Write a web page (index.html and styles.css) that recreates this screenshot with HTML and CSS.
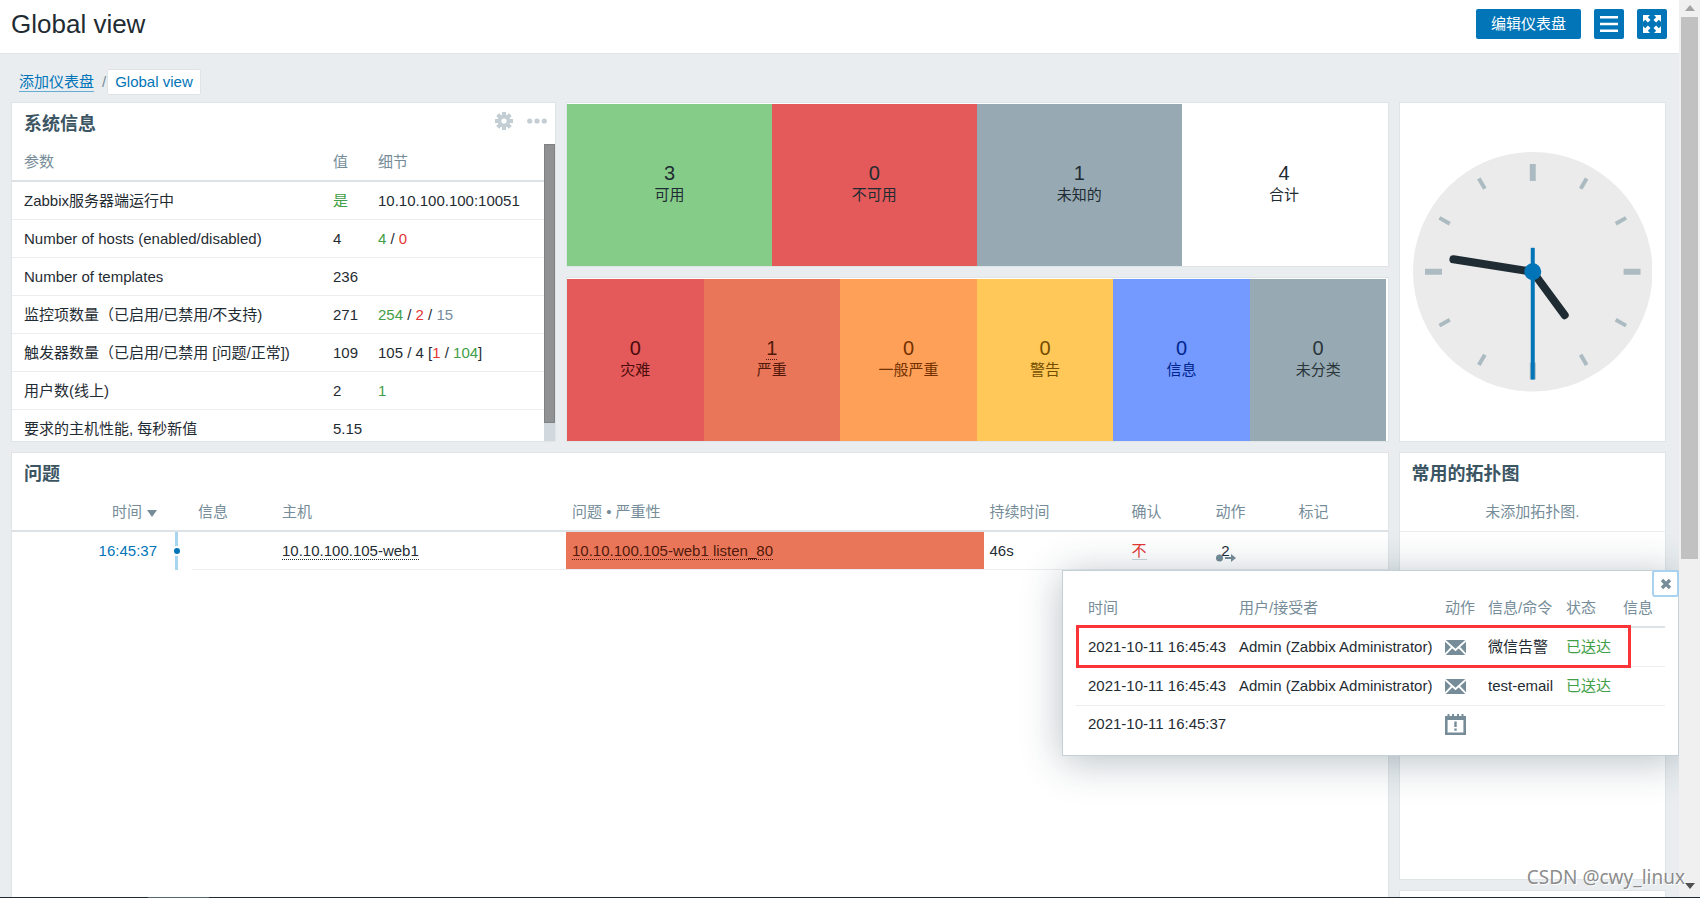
FILE: index.html
```html
<!DOCTYPE html>
<html lang="zh-CN">
<head>
<meta charset="utf-8">
<title>Global view</title>
<link rel="stylesheet" href="styles.css">
</head>
<body>
<div class="window">
  <div class="page">
    <header class="page-header">
      <h1>Global view</h1>
      <div class="header-actions">
        <button class="btn btn-text" type="button">编辑仪表盘</button>
        <button class="btn btn-icon" type="button" aria-label="菜单">
          <svg width="18" height="16" viewBox="0 0 18 16" fill="#fff"><path d="M0 0h18v2.500H0zM0 6.750h18v2.500H0zM0 13.500h18V16H0z"/></svg>
        </button>
        <button class="btn btn-icon" type="button" aria-label="全屏">
          <svg width="18" height="18" viewBox="0 0 18 18" fill="#fff"><path id="fs" d="M0 0h7L4.800 2.200l2.700 2.700-2.600 2.600-2.700-2.700L0 7z"/><use href="#fs" transform="rotate(90 9 9)"/><use href="#fs" transform="rotate(180 9 9)"/><use href="#fs" transform="rotate(270 9 9)"/></svg>
        </button>
      </div>
    </header>
    <nav class="breadcrumb">
      <a class="crumb-link" href="#">添加仪表盘</a>
      <span class="slash">/</span>
      <a class="crumb-current" href="#">Global view</a>
    </nav>

    <main class="dashboard">
      <section class="widget system">
        <div class="widget-head">
          <h2>系统信息</h2>
          <div class="widget-tools">
            <button class="tool" type="button" aria-label="编辑">
              <svg width="18" height="18" viewBox="-9 -9 18 18"><g fill="#c3ced4"><g id="teeth"><rect x="-2" y="-9" width="4" height="18"/><rect x="-9" y="-2" width="18" height="4"/></g><use href="#teeth" transform="rotate(45)"/><circle r="6.500"/></g><circle r="2.600" fill="#fff"/></svg>
            </button>
            <button class="tool" type="button" aria-label="更多">
              <svg width="20" height="6" viewBox="0 0 20 6" fill="#c3ced4"><circle cx="2.700" cy="3" r="2.600"/><circle cx="10" cy="3" r="2.600"/><circle cx="17.300" cy="3" r="2.600"/></svg>
            </button>
          </div>
        </div>
        <div class="scroll-area">
          <div class="scroll-content">
            <table class="list system-list">
              <colgroup><col><col class="c-value"><col class="c-details"></colgroup>
              <thead><tr><th>参数</th><th>值</th><th>细节</th></tr></thead>
              <tbody>
                <tr><td>Zabbix服务器端运行中</td><td class="green">是</td><td>10.10.100.100:10051</td></tr>
                <tr><td>Number of hosts (enabled/disabled)</td><td>4</td><td><span class="green">4</span> / <span class="red">0</span></td></tr>
                <tr><td>Number of templates</td><td>236</td><td></td></tr>
                <tr><td>监控项数量（已启用/已禁用/不支持)</td><td>271</td><td><span class="green">254</span> / <span class="red">2</span> / <span class="grey">15</span></td></tr>
                <tr><td>触发器数量（已启用/已禁用 [问题/正常])</td><td>109</td><td>105 / 4 [<span class="red">1</span> / <span class="green">104</span>]</td></tr>
                <tr><td>用户数(线上)</td><td>2</td><td class="green">1</td></tr>
                <tr><td>要求的主机性能, 每秒新值</td><td>5.15</td><td></td></tr>
              </tbody>
            </table>
          </div>
          <div class="inner-track"><div class="inner-thumb"></div></div>
        </div>
      </section>

      <section class="widget tiles hosts">
        <div class="tile ok"><span class="num">3</span><span>可用</span></div>
        <div class="tile bad"><span class="num">0</span><span>不可用</span></div>
        <div class="tile unknown"><span class="num">1</span><span>未知的</span></div>
        <div class="tile total"><span class="num">4</span><span>合计</span></div>
      </section>

      <section class="widget tiles severities">
        <div class="tile disaster"><span class="num">0</span><span>灾难</span></div>
        <div class="tile high"><a class="num dotted" href="#">1</a><span>严重</span></div>
        <div class="tile average"><span class="num">0</span><span>一般严重</span></div>
        <div class="tile warning"><span class="num">0</span><span>警告</span></div>
        <div class="tile info"><span class="num">0</span><span>信息</span></div>
        <div class="tile na"><span class="num">0</span><span>未分类</span></div>
      </section>

      <section class="widget clock">
        <svg class="clock-face" viewBox="-120 -120 240 240" role="img" aria-label="时钟">
          <circle r="120" fill="#ebebeb"/>
          <g fill="#acbbc2">
            <g id="quarter"><rect x="-3" y="-108" width="6" height="17"/><rect x="-2" y="-108" width="4" height="12" transform="rotate(30)"/><rect x="-2" y="-108" width="4" height="12" transform="rotate(60)"/></g>
            <use href="#quarter" transform="rotate(90)"/><use href="#quarter" transform="rotate(180)"/><use href="#quarter" transform="rotate(270)"/>
          </g>
          <g stroke="#1f2c33" stroke-width="8" stroke-linecap="round"><path d="M0 0L32 43.500"/><path d="M0 0L-79.500 -12.500"/></g>
          <rect x="-2" y="-24" width="4" height="132" fill="#0275b8"/>
          <circle r="8.500" fill="#0275b8"/>
        </svg>
      </section>

      <section class="widget problems">
        <div class="widget-head"><h2>问题</h2></div>
        <table class="list problem-list">
          <colgroup><col class="p-time"><col class="p-line"><col class="p-info"><col class="p-host"><col><col class="p-duration"><col class="p-ack"><col class="p-action"><col class="p-tags"></colgroup>
          <thead><tr><th class="right">时间<svg class="sort" width="10" height="7" viewBox="0 0 10 7"><path d="M0 0h10L5 7z" fill="#768d99"/></svg></th><th></th><th>信息</th><th>主机</th><th>问题 • 严重性</th><th>持续时间</th><th>确认</th><th>动作</th><th>标记</th></tr></thead>
          <tbody><tr>
            <td class="right plain"><a class="time-link" href="#">16:45:37</a></td>
            <td class="timeline plain"><span class="dot"></span></td>
            <td></td>
            <td><a class="dotted" href="#">10.10.100.105-web1</a></td>
            <td class="severity-high"><a class="dotted" href="#">10.10.100.105-web1 listen_80</a></td>
            <td>46s</td>
            <td><a class="ack" href="#">不</a></td>
            <td><button class="action-count" type="button"><span>2</span><svg width="20" height="8" viewBox="0 0 20 8" fill="#768d99"><circle cx="3.500" cy="4" r="3.500"/><path d="M9 3h6V0l5 4-5 4V5H9z"/></svg></button></td>
            <td></td>
          </tr></tbody>
        </table>
      </section>

      <section class="widget maps">
        <div class="widget-head"><h2>常用的拓扑图</h2></div>
        <p class="empty">未添加拓扑图.</p>
      </section>
      <section class="widget next"></section>
    </main>

    <div class="popup" role="dialog" aria-label="动作">
      <button class="close" type="button" aria-label="关闭"><svg width="12" height="12" viewBox="0 0 12 12"><path d="M2 2l8 8M10 2l-8 8" stroke="#768d99" stroke-width="3.400"/></svg></button>
      <table class="list popup-list">
        <colgroup><col class="a-time"><col class="a-user"><col class="a-action"><col class="a-message"><col class="a-status"><col class="a-info"></colgroup>
        <thead><tr><th>时间</th><th>用户/接受者</th><th>动作</th><th>信息/命令</th><th>状态</th><th>信息</th></tr></thead>
        <tbody>
          <tr><td>2021-10-11 16:45:43</td><td>Admin (Zabbix Administrator)</td><td><svg class="cell-icon" width="21" height="15" viewBox="0 0 21 15"><rect width="21" height="15" fill="#768d99"/><path d="M0 .500l10.500 9.500L21 .500M0 14.500l6.800-7M21 14.500l-6.800-7" fill="none" stroke="#fff" stroke-width="1.800"/></svg></td><td>微信告警</td><td class="green">已送达</td><td></td></tr>
          <tr><td>2021-10-11 16:45:43</td><td>Admin (Zabbix Administrator)</td><td><svg class="cell-icon" width="21" height="15" viewBox="0 0 21 15"><rect width="21" height="15" fill="#768d99"/><path d="M0 .500l10.500 9.500L21 .500M0 14.500l6.800-7M21 14.500l-6.800-7" fill="none" stroke="#fff" stroke-width="1.800"/></svg></td><td>test-email</td><td class="green">已送达</td><td></td></tr>
          <tr><td>2021-10-11 16:45:37</td><td></td><td><svg class="cell-icon" width="21" height="21" viewBox="0 0 21 21"><path d="M1.300 4.500h18.400v15.200H1.300z" fill="none" stroke="#768d99" stroke-width="2.600"/><path d="M0 2h21v4H0zM2.500 0h2v3h-2zM7 0h2v3H7zM12 0h2v3h-2zM16.500 0h2v3h-2zM9.300 7.500h2.400v5.500H9.300zM9.300 14.500h2.400v2.300H9.300z" fill="#768d99"/></svg></td><td></td><td></td><td></td></tr>
        </tbody>
      </table>
      <div class="highlight"></div>
    </div>
  </div>
  <div class="scrollbar">
    <svg width="10" height="6" viewBox="0 0 10 6"><path d="M0 6h10L5 0z" fill="#a3a3a3"/></svg>
    <div class="rail"><div class="thumb"></div></div>
    <svg width="10" height="6" viewBox="0 0 10 6"><path d="M0 0h10L5 6z" fill="#505050"/></svg>
  </div>
  <div class="watermark">CSDN @cwy_linux</div>
</div>
<div class="taskbar"><span></span></div>
</body>
</html>
```
FILE: styles.css
```css
* { box-sizing: border-box; }

body {
  margin: 0;
  height: 100vh;
  display: flex;
  flex-direction: column;
  overflow: hidden;
  background: #e9edf0;
  color: #1f2c33;
  font: 15px/18px "Liberation Sans", "Noto Sans CJK SC", sans-serif;
}

h1, h2, p { margin: 0; }
a { color: inherit; text-decoration: none; }
button { font: inherit; padding: 0; border: 0; background: none; cursor: pointer; }
svg { display: block; }

.window { position: relative; flex: 1; min-height: 0; display: flex; overflow: hidden; }
.page { position: relative; flex: 1; min-width: 0; overflow: hidden; }

/* Header */
.page-header {
  display: flex;
  justify-content: space-between;
  padding: 9px 12px 13px 11px;
  background: #fff;
  border-bottom: 1px solid #dfe4e7;
}
h1 { font-size: 26px; line-height: 31px; font-weight: 400; }
.header-actions { display: flex; gap: 13px; }
.btn {
  display: flex;
  align-items: center;
  justify-content: center;
  height: 30px;
  border-radius: 2px;
  background: #0275b8;
  color: #fff;
}
.btn-text { padding: 0 15px; }
.btn-icon { width: 30px; }

.breadcrumb { display: flex; align-items: center; padding: 15px 18px 7px 19px; color: #768d99; }
.crumb-link { color: #0275b8; border-bottom: 1px solid #67acd4; }
.slash { padding-left: 8px; padding-right: 1px; }
.crumb-current {
  height: 26px;
  padding: 3px 7px;
  border: 1px solid #dfe4e7;
  border-radius: 2px;
  background: #fff;
  color: #0275b8;
}

/* Dashboard grid */
.dashboard {
  display: grid;
  grid-template-columns: repeat(6, minmax(0, 1fr));
  grid-template-rows: 165px 165px 428px 165px;
  gap: 10px;
  padding: 0 13px 0 11px;
}
.widget { min-width: 0; border: 1px solid #dfe4e7; background: #fff; overflow: hidden; }
.system { grid-column: 1 / 3; grid-row: 1 / 3; display: flex; flex-direction: column; }
.hosts { grid-column: 3 / 6; grid-row: 1; }
.severities { grid-column: 3 / 6; grid-row: 2; }
.clock { grid-column: 6; grid-row: 1 / 3; }
.problems { grid-column: 1 / 6; grid-row: 3 / 5; }
.maps { grid-column: 6; grid-row: 3; }
.next { grid-column: 6; grid-row: 4; }

.widget-head {
  flex: none;
  display: flex;
  align-items: flex-start;
  justify-content: space-between;
  height: 41px;
  padding: 9px 8px 0 12px;
}
h2 { font-size: 18px; line-height: 25px; font-weight: 700; color: #3c5563; }
.widget-tools { display: flex; gap: 14px; }
.tool { display: flex; align-items: center; height: 18px; }

/* Tables */
.list { width: 100%; table-layout: fixed; border-collapse: separate; border-spacing: 0; }
.list th, .list td { height: 38px; padding: 0 6px; text-align: left; white-space: nowrap; }
.list th { font-weight: 400; color: #768d99; border-bottom: 2px solid #dce2e5; }
.list td { border-bottom: 1px solid #ebeef0; }
.list th:first-child, .list td:first-child { padding-left: 12px; }
.list .right { text-align: right; }
.list .plain { border-bottom: 0; }

.green { color: #429e47; }
.red { color: #e33734; }
.grey { color: #768d99; }

.scroll-area { flex: 1; min-height: 0; display: flex; }
.scroll-content { flex: 1; min-width: 0; overflow: hidden; }
.inner-track { width: 11px; background: #d1d9df; }
.inner-thumb { height: 94%; background: #909192; border: 1px solid #7f8183; }
.c-value { width: 45px; }
.c-details { width: 172px; }

/* Tiles */
.tiles { display: flex; padding: 1px 1px 0 0; }
.tile {
  flex: 1;
  display: flex;
  flex-direction: column;
  align-items: center;
  justify-content: center;
  gap: 1px;
  padding-bottom: 4px;
}
.num { font-size: 20px; line-height: 23px; }
.dotted { border-bottom: 1px dotted currentColor; }
.num.dotted { line-height: 22px; }
.ok { background: #86cc89; }
.bad, .disaster { background: #e45959; }
.unknown, .na { background: #97aab3; }
.high { background: #e97659; color: #52190b; }
.average { background: #ffa059; color: #733100; }
.warning { background: #ffc859; color: #734d00; }
.info { background: #7499ff; color: #00268e; }
.disaster { color: #4b0c0c; }
.na { color: #2a353a; }

.clock { display: flex; align-items: center; justify-content: center; padding: 0 13px; }
.clock-face { width: 100%; max-height: 100%; }

/* Problems */
.p-time { width: 151px; }
.p-line { width: 29px; }
.p-info { width: 84px; }
.p-host { width: 290px; }
.p-duration { width: 142px; }
.p-ack { width: 84px; }
.p-action { width: 83px; }
.p-tags { width: 95px; }
.sort { display: inline-block; margin-left: 5px; }
.time-link { color: #0275b8; }
.list td.timeline {
  padding: 0;
  background: linear-gradient(#a8d5ef, #a8d5ef) 12px 0 / 3px 100% no-repeat;
}
.dot {
  display: block;
  width: 10px;
  height: 10px;
  margin-left: 9px;
  border: 2px solid #fff;
  border-radius: 50%;
  background: #0275b8;
}
.severity-high { background: #e97659; color: #52190b; }
.ack { color: #e33734; border-bottom: 1px solid #ccd5d9; }
.action-count { position: relative; display: block; width: 20px; color: inherit; text-align: center; }
.action-count svg { position: absolute; left: 0; bottom: -2px; }

.empty { padding: 9px 10px 10px; text-align: center; color: #768d99; border-bottom: 1px solid #ebeef0; }

/* Action popup */
.popup {
  position: absolute;
  top: 570px;
  right: 0;
  padding: 18px 13px 13px;
  border: 1px solid #c3d0d7;
  background: #fff;
  box-shadow: 0 5px 38px rgba(31, 59, 73, 0.32);
}
.popup-list { width: 589px; }
.popup-list th, .popup-list td { height: 39px; }
.popup-list tbody tr:last-child td { height: 36px; border-bottom: 0; }
.a-time { width: 157px; }
.a-user { width: 206px; }
.a-action { width: 43px; }
.a-message { width: 78px; }
.a-status { width: 57px; }
.close {
  position: absolute;
  top: -1px;
  right: -1px;
  display: flex;
  align-items: center;
  justify-content: center;
  width: 27px;
  height: 27px;
  border: 2px solid #a8d2f0;
  border-radius: 3px;
  background: #fff;
}
.highlight {
  position: absolute;
  top: 54px;
  left: 13px;
  width: 555px;
  height: 43px;
  border: 3px solid #fb3438;
}

/* Window scrollbar */
.scrollbar {
  width: 21px;
  display: flex;
  flex-direction: column;
  align-items: center;
  gap: 6px;
  padding: 5px 0 8px;
  background: #f0f0f0;
}
.rail { flex: 1; width: 17px; }
.thumb { height: 63%; background: #c1c1c1; }

.watermark {
  position: absolute;
  right: 15px;
  bottom: 6px;
  font: 19px/28px "Noto Sans", sans-serif;
  color: rgba(110, 110, 110, 0.8);
  text-shadow: 1px 1px 0 #fff;
}

.taskbar { height: 1px; background: #1f2a33; }
.taskbar span { display: block; width: 61px; height: 1px; margin-left: 148px; background: #53656d; }
```
